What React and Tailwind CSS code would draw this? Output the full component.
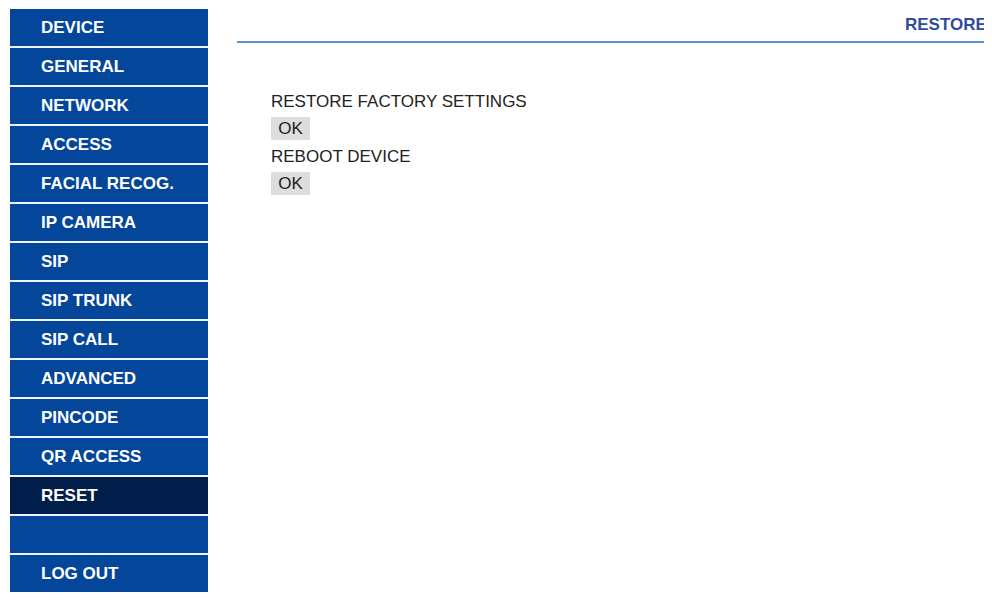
import React from "react";

const menu = [
  "DEVICE",
  "GENERAL",
  "NETWORK",
  "ACCESS",
  "FACIAL RECOG.",
  "IP CAMERA",
  "SIP",
  "SIP TRUNK",
  "SIP CALL",
  "ADVANCED",
  "PINCODE",
  "QR ACCESS",
  "RESET",
  "",
  "LOG OUT",
];

const SideItem = ({ label, active }) => (
  <div
    className={`h-[37px] flex items-center pl-[31px] text-white font-bold text-[17px] ${
      active ? "bg-[#011d49]" : "bg-[#03469a]"
    }`}
  >
    {label}
  </div>
);

const OkButton = () => (
  <button className="w-[39px] h-[23px] bg-[#dddddd] text-[17px] text-[#222] leading-[23px] text-center">
    OK
  </button>
);

const App = () => {
  return (
    <div
      className="w-[992px] h-[602px] bg-white flex items-start overflow-hidden"
      style={{ fontFamily: '"Liberation Sans", Arial, sans-serif' }}
    >
      <div className="ml-[10px] mt-[9px] w-[198px] flex flex-col gap-[2px] bg-[#eef4fb]">
        {menu.map((m, i) => (
          <SideItem key={i} label={m} active={m === "RESET"} />
        ))}
      </div>

      <div className="ml-[29px] w-[747px] overflow-hidden">
        <div className="h-[43px] border-b-2 border-[#5b96d6] relative">
          <div className="absolute left-[668px] top-[16px] whitespace-nowrap text-[17px] font-bold text-[#2f4c9c] leading-[18px]">
            RESTORE
          </div>
        </div>

        <div className="pl-[34px] pt-[49px] flex flex-col items-start text-[17px] text-[#222]">
          <div className="leading-[20px]">RESTORE FACTORY SETTINGS</div>
          <div className="mt-[5px] flex">
            <OkButton />
          </div>
          <div className="leading-[20px] mt-[7px]">REBOOT DEVICE</div>
          <div className="mt-[5px] flex">
            <OkButton />
          </div>
        </div>
      </div>
    </div>
  );
};

export default App;
